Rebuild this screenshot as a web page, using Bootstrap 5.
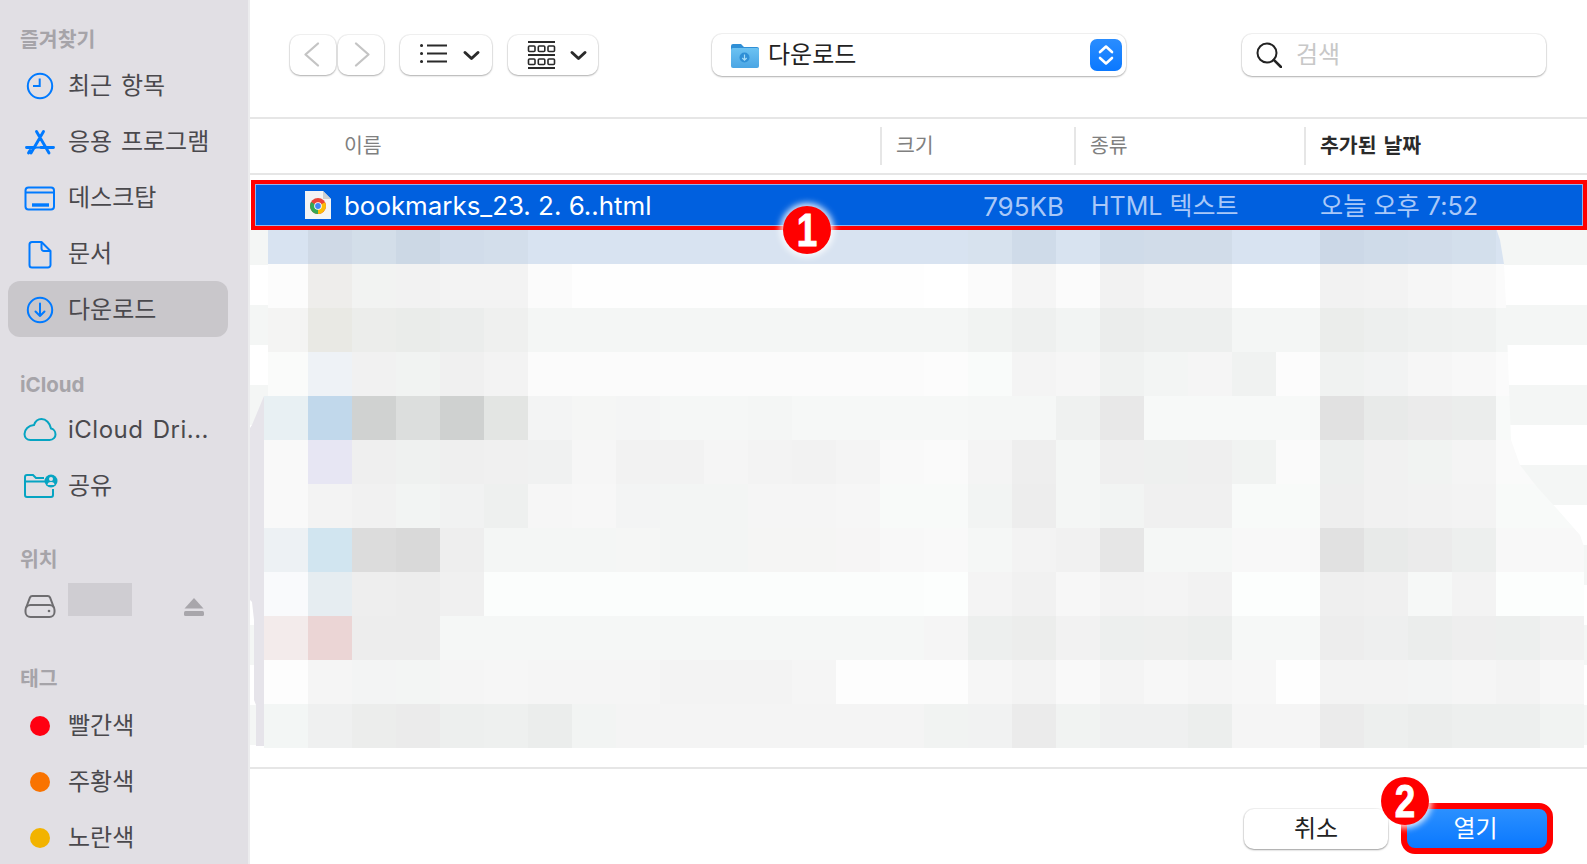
<!DOCTYPE html>
<html lang="ko">
<head>
<meta charset="utf-8">
<title>다운로드</title>
<link href="https://cdn.jsdelivr.net/npm/bootstrap@5.3.0/dist/css/bootstrap.min.css" rel="stylesheet">
<style>
html,body{height:864px;overflow:hidden;background:#fff}
body{font-family:Inter,"Noto Sans CJK KR",sans-serif;color:#333}
.shell{height:864px}
.side{width:250px;flex:none;background:#e1dfe4;border-right:2px solid #ececee;color:#4a494d;font-size:24px;word-spacing:2px;overflow:hidden}
.side-title{height:28px;line-height:28px;margin-left:20px;font-size:20.5px;font-weight:700;color:#a6a4a9}
.t1{margin-top:26px}.t2{margin-top:33px}.t3{margin-top:32px}.t4{margin-top:30px}
.g1{margin-top:4px}.g2{margin-top:3px}.g3{margin-top:5px}
.side-item{height:56px;width:220px;margin-left:8px;border-radius:12px;padding-left:14px;white-space:nowrap}
.side-item.is-on{background:#c9c7cb;margin-top:-1px;margin-bottom:1px;padding-top:2px}
.side-item>svg{flex:none;margin-right:10px}
.wide-text{letter-spacing:.5px}
.blot{width:64px;height:33px;background:#cfcdd2;margin-top:4px}
.side-item>.eject{margin-left:auto;margin-right:24px}
.dot{width:20px;height:20px;border-radius:50%;margin:0 18px 0 8px;flex:none}
.pane{min-width:0}
.tools{height:119px;flex:none;border-bottom:2px solid #e6e6e6;padding:0 0 7px 40px}
.tbtn{height:40px;background:#fff;border:0;padding:0;border-radius:10px;box-shadow:0 1px 2px rgba(0,0,0,.28),0 0 0 1px rgba(0,0,0,.05);flex:none}
.w-nav{width:46px}.w-list{width:92px}.w-grid{width:90px}
.m2{margin-left:2px}.m16{margin-left:16px}
.path{width:414px;height:42px;margin-left:114px;border-radius:10px;background:#fff;box-shadow:0 1px 2px rgba(0,0,0,.28),0 0 0 1px rgba(0,0,0,.05);padding-left:18px;font-size:24px;color:#222;flex:none}
.path span{margin-left:8px}
.stepper{width:32px;height:32px;border-radius:7px;background:linear-gradient(#2a8dff,#0a78ff);margin-left:auto;margin-right:4px}
.find{width:304px;height:42px;margin-left:116px;border-radius:10px;background:#fff;box-shadow:0 1px 2px rgba(0,0,0,.28),0 0 0 1px rgba(0,0,0,.05);padding-left:14px;font-size:24px;color:#c8c8c8;flex:none}
.find span{margin-left:14px}
.heads{height:56px;flex:none;border-bottom:2px solid #e6e6e6;font-size:20.5px;word-spacing:2px;color:#808080}
.hc{height:38px;margin-top:8px;border-left:2px solid #e6e6e6;padding-left:14px;line-height:38px}
.hc-name{width:630px;padding-left:94px;border-left:0}
.hc-size{width:194px}.hc-kind{width:230px}
.hc-date{font-weight:700;color:#2b2b2b}
.files{flex:1 1 0;min-height:0;position:relative;overflow:hidden}
.sel{height:50px;margin:5px 0 0 1px;padding-top:3px;border:4px solid #f00;background:#0060df;box-shadow:inset 0 0 0 1px #8db4ee;font-size:25.5px;color:#a9c8f8;position:relative;z-index:2;white-space:nowrap}
.sel svg{margin-left:50px;flex:none;margin-top:-3px}
.fname{color:#fff;margin-left:13px;width:635px;flex:none;font-size:25.9px}
.fsize{width:85px;text-align:right;flex:none;font-size:26px}
.fkind{margin-left:27px;width:229px;flex:none;font-size:25px}
.fdate{font-size:25.2px}
.mosaic{display:block;width:1337px;height:520px;flex:none}
.foot{height:97px;flex:none;border-top:2px solid #e6e6e6;font-size:24px}
.cancel{width:144px;height:40px;margin-top:40px;background:#fff;border-radius:10px;border:0;color:#222;font-size:24px;line-height:40px;padding:0;box-shadow:0 1px 2px rgba(0,0,0,.35),0 0 0 1px rgba(0,0,0,.05)}
.open{width:152px;height:51px;margin:34px 34px 0 13px;border:6px solid #f00;border-radius:14px;background:linear-gradient(#2b90ff,#0a78ff);color:#fff;font-size:24px;line-height:36px;padding:0 3px 0 0}
.open:hover,.cancel:hover{color:inherit}
.pin{position:absolute;width:48px;height:48px;border-radius:50%;background:#f00;color:#fff;font-family:"Liberation Sans",sans-serif;font-weight:700;font-size:46px;line-height:48px;text-align:center;z-index:5;box-shadow:0 0 6px 3px rgba(255,255,255,.85)}
.pin b{display:block;transform:scaleX(.8);-webkit-text-stroke:1px #fff}
.pin-a{left:783px;top:206px}
.pin-b{left:1381px;top:777px}
</style>
</head>
<body>
<div class="shell d-flex position-relative">
  <aside class="side d-flex flex-column">
    <div class="side-title t1">즐겨찾기</div>
    <div class="g1">
      <div class="side-item d-flex align-items-center"><svg width="36" height="32" viewBox="0 0 36 32" fill="none" stroke="#007aff" stroke-width="2"><circle cx="18" cy="16" r="12.2"/><path d="M17.7 8.5V16H11"/></svg>최근 항목</div>
      <div class="side-item d-flex align-items-center"><svg width="36" height="32" viewBox="0 0 36 32" fill="none" stroke="#007aff" stroke-width="2.9" stroke-linecap="round"><path d="M21.5 5.5 9 27M14.5 5.5 27 27M4.5 21.500H13M19 21.500H31.500M6.500 27l1.500-2.500"/><path d="M13 21.500h8" stroke-width="2"/></svg>응용 프로그램</div>
      <div class="side-item d-flex align-items-center"><svg width="36" height="32" viewBox="0 0 36 32" fill="none" stroke="#007aff" stroke-width="2"><rect x="3.500" y="5.500" width="28.500" height="22" rx="3"/><path d="M3.500 10.500H32"/><path d="M10 23H27" stroke-width="3.400"/></svg>데스크탑</div>
      <div class="side-item d-flex align-items-center"><svg width="36" height="32" viewBox="0 0 36 32" fill="none" stroke="#007aff" stroke-width="2" stroke-linejoin="round"><path d="M10 4H19.500L28.500 13V27a2.500 2.500 0 0 1-2.500 2.500H10A2.500 2.500 0 0 1 7.500 27V6.500A2.500 2.500 0 0 1 10 4Z"/><path d="M19.500 4V10.500a2.500 2.500 0 0 0 2.500 2.500h6.500"/></svg>문서</div>
      <div class="side-item is-on d-flex align-items-center"><svg width="36" height="32" viewBox="0 0 36 32" fill="none" stroke="#007aff" stroke-width="2" stroke-linecap="round" stroke-linejoin="round"><circle cx="18" cy="16" r="12.200"/><path d="M18 9.500V22M13.500 17.500 18 22l4.500-4.500"/></svg>다운로드</div>
    </div>
    <div class="side-title t2">iCloud</div>
    <div class="g2">
      <div class="side-item d-flex align-items-center"><svg width="36" height="32" viewBox="0 0 36 32" fill="none" stroke="#06a4c2" stroke-width="2"><path d="M8.500 26H27.500C31.500 26 33.500 23 33.500 20.500 33.500 17.500 31.500 15 29 14.500 28 9 24 5 19.500 5 15.500 5 13 8 12 11 6.500 11.500 2.500 15.500 2.500 20 2.500 23.500 5 26 8.500 26Z"/></svg><span class="wide-text">iCloud Dri...</span></div>
      <div class="side-item d-flex align-items-center"><svg width="36" height="32" viewBox="0 0 36 32" fill="none" stroke="#06a4c2" stroke-width="2"><path d="M23 11.500H3M31 19V25a2 2 0 0 1-2 2H5a2 2 0 0 1-2-2V7a2 2 0 0 1 2-2h6l3 3h8"/><circle cx="29" cy="11" r="6.500" fill="#06a4c2" stroke="none"/><circle cx="29" cy="9" r="2" fill="#e1dfe4" stroke="none"/><path d="M25.500 15a3.500 3 0 0 1 7 0Z" fill="#e1dfe4" stroke="none"/></svg>공유</div>
    </div>
    <div class="side-title t3">위치</div>
    <div class="g3">
      <div class="side-item d-flex align-items-center"><svg width="36" height="32" viewBox="0 0 36 32" fill="none" stroke="#6e6d70" stroke-width="2"><path d="M4 17 8 6.500A2.500 2.500 0 0 1 10.500 5H25.500A2.500 2.500 0 0 1 28 6.500L32 17"/><rect x="3.500" y="14" width="29" height="12" rx="5"/><circle cx="27" cy="20" r="1.300" fill="#6e6d70" stroke="none"/></svg><div class="blot align-self-start"></div><svg class="eject" width="20" height="18" viewBox="0 0 20 18"><path d="M10 0 19.500 10.500H.5Z" fill="#a8a6ab"/><rect x="0" y="13" width="20" height="5" rx="1.500" fill="#a8a6ab"/></svg></div>
    </div>
    <div class="side-title t4">태그</div>
    <div class="g3">
      <div class="side-item d-flex align-items-center"><span class="dot" style="background:#ff0011"></span>빨간색</div>
      <div class="side-item d-flex align-items-center"><span class="dot" style="background:#f97300"></span>주황색</div>
      <div class="side-item d-flex align-items-center"><span class="dot" style="background:#f2b300"></span>노란색</div>
    </div>
  </aside>
  <main class="pane flex-grow-1 d-flex flex-column">
    <div class="tools d-flex align-items-center">
      <button class="tbtn w-nav d-flex" type="button" aria-label="뒤로"><svg width="46" height="40" viewBox="0 0 46 40" fill="none" stroke="#c4c4c4" stroke-width="2.300" stroke-linecap="round" stroke-linejoin="round"><path d="M28 8.500 15.500 19.500 28 30.500"/></svg></button>
      <button class="tbtn w-nav m2 d-flex" type="button" aria-label="앞으로"><svg width="46" height="40" viewBox="0 0 46 40" fill="none" stroke="#c4c4c4" stroke-width="2.300" stroke-linecap="round" stroke-linejoin="round"><path d="M18 8.500 30.500 19.500 18 30.500"/></svg></button>
      <button class="tbtn w-list m16 d-flex" type="button" aria-label="목록"><svg width="92" height="40" viewBox="0 0 92 40" fill="none" stroke="#2a2a2a"><path d="M27 10.500H47M27 18.500H47M27 26.500H47" stroke-width="1.800"/><path d="M21.500 10.500h.1M21.500 18.500h.1M21.500 26.500h.1" stroke-width="3" stroke-linecap="round"/><path d="M65 17.500 71.500 23.500 78 17.500" stroke-width="3" stroke-linecap="round" stroke-linejoin="round"/></svg></button>
      <button class="tbtn w-grid m16 d-flex" type="button" aria-label="보기"><svg width="90" height="40" viewBox="0 0 90 40" fill="none" stroke="#2a2a2a" stroke-width="1.600"><path d="M20 7H47M20 20H47M20 33H47" stroke-width="1.800"/><rect x="20.500" y="11" width="6.500" height="5.500" rx="1"/><rect x="30.300" y="11" width="6.500" height="5.500" rx="1"/><rect x="40" y="11" width="6.500" height="5.500" rx="1"/><rect x="20.500" y="24" width="6.500" height="5.500" rx="1"/><rect x="30.300" y="24" width="6.500" height="5.500" rx="1"/><rect x="40" y="24" width="6.500" height="5.500" rx="1"/><path d="M64 17.500 70.500 23.500 77 17.500" stroke-width="3" stroke-linecap="round" stroke-linejoin="round"/></svg></button>
      <div class="path d-flex align-items-center">
        <svg width="30" height="28" viewBox="0 0 30 28"><defs><linearGradient id="fg" x1="0" y1="0" x2="0" y2="1"><stop offset="0" stop-color="#6cc2f2"/><stop offset="1" stop-color="#4aa5e4"/></linearGradient></defs><path d="M1 5a2 2 0 0 1 2-2h8l3 3h13a2 2 0 0 1 2 2v1H1Z" fill="#2f8fd6"/><rect x="1" y="7" width="28" height="20" rx="2" fill="url(#fg)"/><circle cx="14.500" cy="16.500" r="5" fill="#2f8fd6"/><path d="M14.500 13.500V19M12.300 17l2.200 2.200 2.200-2.200" fill="none" stroke="#a6dcf8" stroke-width="1.200"/></svg>
        <span>다운로드</span>
        <div class="stepper d-flex align-items-center justify-content-center"><svg width="18" height="24" viewBox="0 0 18 24" fill="none" stroke="#fff" stroke-width="2.600" stroke-linecap="round" stroke-linejoin="round"><path d="M3 9 9 3.500 15 9M3 15 9 20.500 15 15"/></svg></div>
      </div>
      <div class="find d-flex align-items-center"><svg width="26" height="26" viewBox="0 0 26 26" fill="none" stroke="#222" stroke-width="2"><circle cx="11" cy="11" r="9.500"/><path d="M17.800 17.800 25 25" stroke-width="2.600" stroke-linecap="round"/></svg><span>검색</span></div>
    </div>
    <div class="heads d-flex">
      <div class="hc hc-name">이름</div>
      <div class="hc hc-size">크기</div>
      <div class="hc hc-kind">종류</div>
      <div class="hc hc-date">추가된 날짜</div>
    </div>
    <div class="files d-flex flex-column">
      <div class="sel d-flex align-items-center">
        <svg width="26" height="28" viewBox="0 0 26 28"><path d="M0 0H18L26 8V28H0Z" fill="#f4f4f4"/><path d="M18 0V8H26Z" fill="#cfcfcf"/><circle cx="13" cy="15" r="8" fill="#ea4335"/><path d="M13 15 6.100 11A8 8 0 0 0 13 23Z" fill="#34a853"/><path d="M13 15 20 11.200A8 8 0 0 1 13 23Z" fill="#fbbc05"/><circle cx="13" cy="15" r="3.800" fill="#fff"/><circle cx="13" cy="15" r="2.900" fill="#4285f4"/></svg>
        <span class="fname">bookmarks_23. 2. 6..html</span>
        <span class="fsize">795KB</span>
        <span class="fkind">HTML 텍스트</span>
        <span class="fdate">오늘 오후 7:52</span>
      </div>
      <svg class="mosaic" id="mosaic" viewBox="250 230 1337 520" shape-rendering="crispEdges" aria-hidden="true"></svg>
    </div>
    <div class="foot d-flex justify-content-end align-items-start">
      <button class="btn cancel" type="button">취소</button>
      <button class="btn open" type="button">열기</button>
    </div>
  </main>
  <div class="pin pin-a"><b>1</b></div>
  <div class="pin pin-b"><b>2</b></div>
</div>
<script src="https://cdn.jsdelivr.net/npm/bootstrap@5.3.0/dist/js/bootstrap.bundle.min.js"></script>
<script>
(function(){
  var band="d8e3f1 cfd9e6 d3dee9 ccd8e5 d1dcea d3deeb d8e3f1 d8e3f1 d8e3f1 d8e3f1 d8e3f1 d8e3f1 d8e3f1 d8e3f1 d8e3f1 d8e3f1 d7e2ee cfdbe9 d8e3f0 cfdbe9 d1dce9 d1dce9 d8e3f1 d8e3f1 ccd8e7 cfdbe9 d1dcea d3dfec d8e3f1 d8e3f1";
  var rows=[
  "fcfcfc eeedeb f2f3f2 f2f2f2 f3f3f3 f3f3f3 fbfbfb fefefe fefefe fefefe fefefe fefefe fefefe fefefe fefefe ffffff fbfbfb f5f5f5 fbfbfb f2f2f2 f5f5f5 f5f5f5 ffffff ffffff f2f2f2 f3f3f3 f6f6f6 f8f8f8 fbfbfb fbfbfb",
  "f4f4f3 e9e9e4 ecedeb eaecea ebedec eff0ef f4f6f5 f4f6f5 f4f6f5 f4f6f5 f4f6f5 f4f6f5 f4f6f5 f4f6f5 f4f6f5 f4f6f5 f1f3f2 eef0ef f2f4f3 ebedec edefee edefee f4f6f5 f4f6f5 ebedeb edefee eff1f0 f0f2f1 f4f6f5 f4f6f5",
  "fafbfa eef2f6 f1f1f1 f1f3f2 f0f0f0 f3f3f3 fbfbfb fbfbfb fbfbfb fbfbfb fbfbfb fbfbfb fbfbfb fbfbfb fbfbfb fcfcfc f9fbfa f4f4f4 f6f6f6 f0f2f1 f3f5f4 f5f5f5 f0f2f1 fcfcfc f0f2f1 f2f3f3 f6f6f6 f8f8f8 fbfbfb fbfbfb",
  "e8f0f3 c1d8eb d0d2d1 dcdedd cfd1d0 e3e5e3 f3f4f4 f5f6f5 f4f5f5 f5f7f6 f5f7f6 f4f6f5 f6f8f7 f6f8f7 f6f8f7 f6f8f7 f5f7f6 f5f7f6 eff1f0 e8e8e8 f7f9f8 f7f9f8 f7f9f8 f7f9f8 e1e1e1 e8eae9 ebebeb ebedec f8faf9 f8faf9",
  "f9f9f9 e7e6f3 efefef eff1f0 efefef f0f0f0 f0f1f1 f6f6f6 f2f2f2 f2f2f2 f5f5f5 f3f3f3 f2f2f2 f4f4f4 f9f9f9 fafafa f4f4f4 eeeeee f4f6f5 efefef eef0ef efefef f1f3f2 fafafa edefee f1f1f1 f1f3f2 f4f4f4 fafafa fafafa",
  "f9f9f9 f3f3f3 f1f1f1 f2f4f3 f1f2f2 eef0ef f6f6f6 f7f7f7 f3f4f4 f3f5f4 f3f5f4 f5f5f5 f5f5f5 f6f6f6 f8faf9 f8faf9 f2f4f3 ededed f4f6f5 f2f4f3 f0f0f0 f0f0f0 f8faf9 f8faf9 eeeeee f1f1f1 f2f2f2 f3f3f3 f8faf9 f8faf9",
  "edf1f4 d1e5f0 dcdcdc d9d9d9 eeeeee f4f6f5 f4f6f5 f4f6f5 f5f6f5 f3f5f4 f3f5f4 f5f5f4 f5f5f4 f6f5f5 f8f8f8 f9f9f9 f5f7f6 f3f3f3 f1f1f1 e6e6e6 f5f7f6 f5f7f6 f8f8f8 f8f8f8 e1e1e1 e8eae9 ebebeb edefee f8f8f8 f8f8f8",
  "f9fafc e6edf1 eeeeee ededed f0f0f0 fbfdfc fbfdfc fbfdfc fbfdfc fbfdfc fbfdfc fbfdfc fbfdfc fbfdfc fbfdfc fcfefd f4f4f4 f1f1f1 f7f7f7 f3f3f3 f4f4f4 f2f2f2 fcfefd fcfefd efefef f0f0f0 f6f8f7 f3f3f3 fcfefd fcfefd",
  "f3ebeb ebd5d5 ededed ededed f5f7f6 f5f7f6 f5f7f6 f5f7f6 f5f7f6 f5f7f6 f5f7f6 f5f7f6 f5f7f6 f5f7f6 f5f7f6 f5f5f5 edefee ecedec f2f2f2 edefee eeefee eceeed f6f8f7 f6f8f7 ededed eeefef ebedec eeeeee edefee f1f1f1",
  "fdfdfd f5f5f5 f3f4f4 f3f5f4 f5f5f5 f6f6f6 f5f5f5 f5f5f5 f5f5f5 f3f3f3 f3f3f3 f3f3f3 f5f5f5 fdfdfd fdfdfd fdfdfd f6f6f6 f3f3f3 f9f9f9 f4f4f4 f7f7f7 f5f5f5 f7f7f7 fefefe f3f3f3 f3f3f3 f3f4f4 f5f5f5 f3f3f3 f7f7f7",
  "f3f6f5 eff0f0 ecedec ebebeb edefee eef0ef ebedec f2f4f3 f4f4f4 f4f4f4 f4f4f4 f4f4f4 f4f4f4 f4f4f4 f4f4f4 f1f3f2 f1f2f2 ebebeb f1f3f2 eff0f0 eff0f0 eceeed f5f5f5 f5f5f5 ebebeb edefee ebedec edefee edefee f1f3f2"
  ];
  var svg=document.getElementById('mosaic'),NS=svg.namespaceURI;
  function el(n,a,p){var e=document.createElementNS(NS,n);for(var k in a)e.setAttribute(k,a[k]);(p||svg).appendChild(e);return e}
  [225,305,385,465,545,625,705].forEach(function(y){el('rect',{x:250,y:y,width:1337,height:40,fill:'#f4f6f5'})});
  el('polygon',{points:'264,396 252,425 250,428 250,600 252,602 254,620 254,700 256,705 256,746 264,746',fill:'#e6e4ea','shape-rendering':'auto'});
  var defs=el('defs',{});
  var cp=el('clipPath',{id:'mc'},defs);
  el('polygon',{points:'268,228 1496,228 1500,240 1504,264 1506,305 1511,440 1520,465 1537,487 1558,510 1580,535 1587,555 1587,748 264,748 264,396 268,396'},cp);
  var g=el('g',{'clip-path':'url(#mc)'});
  band.split(' ').forEach(function(c,i){el('rect',{x:264+44*i,y:228,width:44,height:36,fill:'#'+c},g)});
  rows.forEach(function(r,j){r.split(' ').forEach(function(c,i){el('rect',{x:264+44*i,y:264+44*j,width:44,height:44,fill:'#'+c},g)})});
})();
</script>
</body>
</html>
